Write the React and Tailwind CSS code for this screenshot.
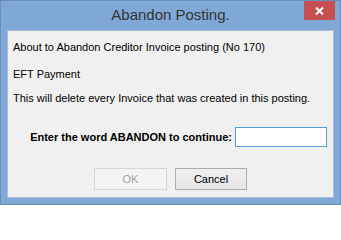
import React from 'react';

export default function App() {
  return (
    <div
      className="w-[341px] h-[205px] bg-[#80a8d7] border border-[#6a8dbb] flex flex-col text-black"
      style={{ fontFamily: '"Liberation Sans", Arial, sans-serif' }}
    >
      {/* title bar */}
      <div className="relative h-[29px] shrink-0 flex items-center justify-center">
        <span className="text-[15px] leading-[18px] text-[#333333] -mt-[1px]">Abandon Posting.</span>
        <button className="absolute top-0 right-[5px] w-[31px] h-[19px] bg-[#c75050] flex items-center justify-center">
          <svg width="9" height="8" viewBox="0 0 9 8">
            <path d="M1 0.5 L8 7.5 M8 0.5 L1 7.5" stroke="#ffffff" strokeWidth="2" />
          </svg>
        </button>
      </div>

      {/* client area */}
      <div className="mx-[6px] h-[168px] shrink-0 bg-[#f0f0f0] border border-[#a9bfd9] flex flex-col text-[11px] leading-[13px]">
        <div className="pt-[10px] pl-[5px]">About to Abandon Creditor Invoice posting (No 170)</div>
        <div className="mt-[14px] pl-[5px]">EFT Payment</div>
        <div className="mt-[11px] pl-[5px]">This will delete every Invoice that was created in this posting.</div>

        <div className="mt-[22px] flex items-center justify-end gap-[3px] pr-[6px]">
          <span className="font-bold">Enter the word ABANDON to continue:</span>
          <input
            type="text"
            className="w-[92px] h-[20px] bg-white border border-[#5b9ad9] outline-none px-1 text-[11px]"
          />
        </div>

        <div className="mt-[21px] flex justify-center gap-[8px]">
          <button
            disabled
            className="w-[73px] h-[22px] border border-[#d6d6d6] bg-[#f4f4f4] text-[#a3a3a3] text-[11px]"
          >
            OK
          </button>
          <button className="w-[72px] h-[22px] border border-[#acacac] bg-gradient-to-b from-[#f0f0f0] to-[#e5e5e5] text-black text-[11px]">
            Cancel
          </button>
        </div>
      </div>
    </div>
  );
}
